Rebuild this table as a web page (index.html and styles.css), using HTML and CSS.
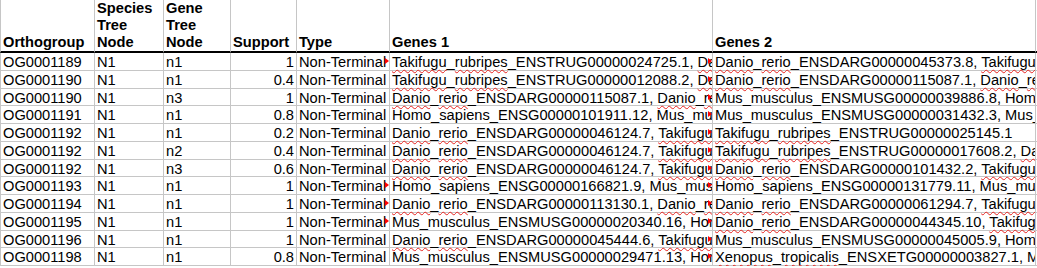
FILE: index.html
```html
<!DOCTYPE html>
<html>
<head>
<meta charset="utf-8">
<link rel="stylesheet" href="styles.css">
</head>
<body>
<div class="sheet">
  <div class="row head">
    <div class="c">Orthogroup</div>
    <div class="c">Species Tree Node</div>
    <div class="c">Gene Tree Node</div>
    <div class="c">Support</div>
    <div class="c">Type</div>
    <div class="c">Genes 1</div>
    <div class="c">Genes 2</div>
    <div class="c"></div>
  </div>

  <div class="row">
    <div class="c">OG0001189</div><div class="c">N1</div><div class="c">n1</div><div class="c num">1</div>
    <div class="c ov">Non-Terminal</div>
    <div class="c ov"><span class="sp">Takifugu</span>_<span class="sp">rubripes</span>_ENSTRUG00000024725.1, <span class="sp">Danio</span>_<span class="sp">rerio</span>_ENSDARG00000045373.8</div>
    <div class="c"><span class="sp">Danio</span>_<span class="sp">rerio</span>_ENSDARG00000045373.8, <span class="sp">Takifugu</span>_<span class="sp">rubripes</span>_ENSTRUG00000024725.1</div>
    <div class="c"></div>
  </div>
  <div class="row">
    <div class="c">OG0001190</div><div class="c">N1</div><div class="c">n1</div><div class="c num">0.4</div>
    <div class="c">Non-Terminal</div>
    <div class="c ov"><span class="sp">Takifugu</span>_<span class="sp">rubripes</span>_ENSTRUG00000012088.2, <span class="sp">Danio</span>_<span class="sp">rerio</span>_ENSDARG00000115087.1</div>
    <div class="c"><span class="sp">Danio</span>_<span class="sp">rerio</span>_ENSDARG00000115087.1, <span class="sp">Danio</span>_<span class="sp">rerio</span>_ENSDARG00000012088.2</div>
    <div class="c"></div>
  </div>
  <div class="row">
    <div class="c">OG0001190</div><div class="c">N1</div><div class="c">n3</div><div class="c num">1</div>
    <div class="c">Non-Terminal</div>
    <div class="c ov"><span class="sp">Danio</span>_<span class="sp">rerio</span>_ENSDARG00000115087.1, <span class="sp">Danio</span>_<span class="sp">rerio</span>_ENSDARG00000012088.2</div>
    <div class="c">Mus_musculus_ENSMUSG00000039886.8, Homo_sapiens_ENSG00000106511.6</div>
    <div class="c"></div>
  </div>
  <div class="row">
    <div class="c">OG0001191</div><div class="c">N1</div><div class="c">n1</div><div class="c num">0.8</div>
    <div class="c">Non-Terminal</div>
    <div class="c ov">Homo_sapiens_ENSG00000101911.12, Mus_musculus_ENSMUSG00000031432.3</div>
    <div class="c">Mus_musculus_ENSMUSG00000031432.3, Mus_musculus_ENSMUSG00000031433.1</div>
    <div class="c"></div>
  </div>
  <div class="row">
    <div class="c">OG0001192</div><div class="c">N1</div><div class="c">n1</div><div class="c num">0.2</div>
    <div class="c">Non-Terminal</div>
    <div class="c ov"><span class="sp">Danio</span>_<span class="sp">rerio</span>_ENSDARG00000046124.7, <span class="sp">Takifugu</span>_<span class="sp">rubripes</span>_ENSTRUG00000025145.1</div>
    <div class="c"><span class="sp">Takifugu</span>_<span class="sp">rubripes</span>_ENSTRUG00000025145.1</div>
    <div class="c"></div>
  </div>
  <div class="row">
    <div class="c">OG0001192</div><div class="c">N1</div><div class="c">n2</div><div class="c num">0.4</div>
    <div class="c">Non-Terminal</div>
    <div class="c ov"><span class="sp">Danio</span>_<span class="sp">rerio</span>_ENSDARG00000046124.7, <span class="sp">Takifugu</span>_<span class="sp">rubripes</span>_ENSTRUG00000025145.1</div>
    <div class="c"><span class="sp">Takifugu</span>_<span class="sp">rubripes</span>_ENSTRUG00000017608.2, <span class="sp">Danio</span>_<span class="sp">rerio</span>_ENSDARG00000101432.2</div>
    <div class="c"></div>
  </div>
  <div class="row">
    <div class="c">OG0001192</div><div class="c">N1</div><div class="c">n3</div><div class="c num">0.6</div>
    <div class="c">Non-Terminal</div>
    <div class="c ov"><span class="sp">Danio</span>_<span class="sp">rerio</span>_ENSDARG00000046124.7, <span class="sp">Takifugu</span>_<span class="sp">rubripes</span>_ENSTRUG00000025145.1</div>
    <div class="c"><span class="sp">Danio</span>_<span class="sp">rerio</span>_ENSDARG00000101432.2, <span class="sp">Takifugu</span>_<span class="sp">rubripes</span>_ENSTRUG00000017608.2</div>
    <div class="c"></div>
  </div>
  <div class="row">
    <div class="c">OG0001193</div><div class="c">N1</div><div class="c">n1</div><div class="c num">1</div>
    <div class="c ov">Non-Terminal</div>
    <div class="c ov">Homo_sapiens_ENSG00000166821.9, Mus_musculus_ENSMUSG00000030525.8</div>
    <div class="c">Homo_sapiens_ENSG00000131779.11, Mus_musculus_ENSMUSG00000028099.9</div>
    <div class="c"></div>
  </div>
  <div class="row">
    <div class="c">OG0001194</div><div class="c">N1</div><div class="c">n1</div><div class="c num">1</div>
    <div class="c ov">Non-Terminal</div>
    <div class="c ov"><span class="sp">Danio</span>_<span class="sp">rerio</span>_ENSDARG00000113130.1, <span class="sp">Danio</span>_<span class="sp">rerio</span>_ENSDARG00000061294.7</div>
    <div class="c"><span class="sp">Danio</span>_<span class="sp">rerio</span>_ENSDARG00000061294.7, <span class="sp">Takifugu</span>_<span class="sp">rubripes</span>_ENSTRUG00000003384.2</div>
    <div class="c"></div>
  </div>
  <div class="row">
    <div class="c">OG0001195</div><div class="c">N1</div><div class="c">n1</div><div class="c num">1</div>
    <div class="c ov">Non-Terminal</div>
    <div class="c ov">Mus_musculus_ENSMUSG00000020340.16, Homo_sapiens_ENSG00000100350.15</div>
    <div class="c"><span class="sp">Danio</span>_<span class="sp">rerio</span>_ENSDARG00000044345.10, <span class="sp">Takifugu</span>_<span class="sp">rubripes</span>_ENSTRUG00000007102.2</div>
    <div class="c"></div>
  </div>
  <div class="row">
    <div class="c">OG0001196</div><div class="c">N1</div><div class="c">n1</div><div class="c num">1</div>
    <div class="c">Non-Terminal</div>
    <div class="c ov"><span class="sp">Danio</span>_<span class="sp">rerio</span>_ENSDARG00000045444.6, <span class="sp">Takifugu</span>_<span class="sp">rubripes</span>_ENSTRUG00000019877.2</div>
    <div class="c">Mus_musculus_ENSMUSG00000045005.9, Homo_sapiens_ENSG00000158486.14</div>
    <div class="c"></div>
  </div>
  <div class="row">
    <div class="c">OG0001198</div><div class="c">N1</div><div class="c">n1</div><div class="c num">0.8</div>
    <div class="c">Non-Terminal</div>
    <div class="c ov">Mus_musculus_ENSMUSG00000029471.13, Homo_sapiens_ENSG00000111224.12</div>
    <div class="c"><span class="sp">Xenopus</span>_<span class="sp">tropicalis</span>_ENSXETG00000003827.1, Mus_musculus_ENSMUSG00000029471.13</div>
    <div class="c"></div>
  </div>
</div>
</body>
</html>
```

FILE: styles.css
```css
html, body {
  margin: 0;
  padding: 0;
  background: #ffffff;
}

body {
  font-family: "Liberation Sans", Arial, sans-serif;
  font-size: 14.67px;
  color: #000000;
  overflow: hidden;
}

.sheet {
  display: grid;
  grid-template-columns: 95px 69px 67px 66px 93px 323px 323px 1fr;
  grid-template-rows: 53px repeat(12, 17.75px);
  width: 1037px;
}

.row {
  display: contents;
}

.c {
  position: relative;
  box-sizing: border-box;
  border-right: 1px solid #c6c6c6;
  border-bottom: 1px solid #c6c6c6;
  padding: 1px 0 0 2px;
  line-height: 16px;
  white-space: nowrap;
  overflow-x: clip;
  overflow-y: visible;
}

.row .c:first-child {
  border-left: 1px solid #c6c6c6;
}

.head .c {
  display: flex;
  align-items: flex-end;
  white-space: normal;
  font-weight: bold;
  line-height: 17px;
  padding: 0 2px 0 2px;
  border-bottom: 2px solid #000000;
}

.num {
  text-align: right;
  padding-right: 2px;
}

.ov::after {
  content: "";
  position: absolute;
  right: 0;
  top: 5px;
  width: 0;
  height: 0;
  border-left: 4px solid #ff0000;
  border-top: 3px solid transparent;
  border-bottom: 3px solid transparent;
}

.sp {
  text-decoration: underline wavy #e8231f;
  text-decoration-thickness: 1px;
  text-underline-offset: 2px;
  text-decoration-skip-ink: none;
}
```
